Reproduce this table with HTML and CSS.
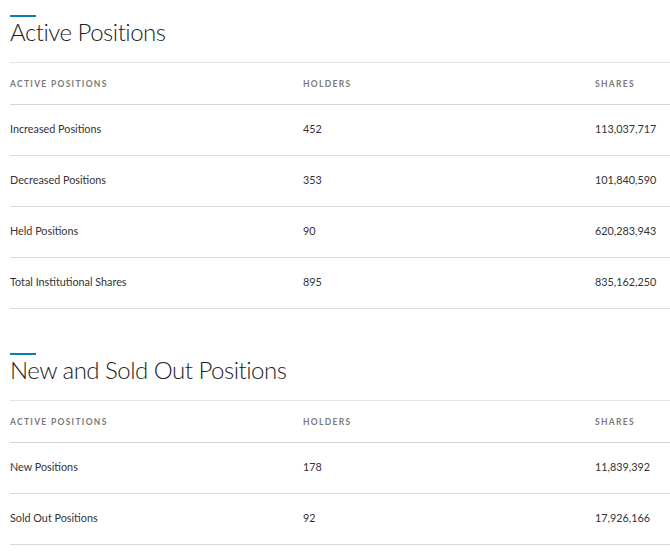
FILE: index.html
```html
<!DOCTYPE html>
<html>
<head>
<meta charset="utf-8">
<link rel="stylesheet" href="styles.css">
</head>
<body>
<section class="block">
  <div class="accent"></div>
  <h2 class="title">Active Positions</h2>
  <table class="data">
    <thead>
      <tr><th class="c1">Active Positions</th><th class="c2">Holders</th><th class="c3">Shares</th></tr>
    </thead>
    <tbody>
      <tr><td>Increased Positions</td><td>452</td><td>113,037,717</td></tr>
      <tr><td>Decreased Positions</td><td>353</td><td>101,840,590</td></tr>
      <tr><td>Held Positions</td><td>90</td><td>620,283,943</td></tr>
      <tr><td>Total Institutional Shares</td><td>895</td><td>835,162,250</td></tr>
    </tbody>
  </table>
</section>
<section class="block second">
  <div class="accent"></div>
  <h2 class="title">New and Sold Out Positions</h2>
  <table class="data">
    <thead>
      <tr><th class="c1">Active Positions</th><th class="c2">Holders</th><th class="c3">Shares</th></tr>
    </thead>
    <tbody>
      <tr><td>New Positions</td><td>178</td><td>11,839,392</td></tr>
      <tr><td>Sold Out Positions</td><td>92</td><td>17,926,166</td></tr>
    </tbody>
  </table>
</section>
</body>
</html>
```

FILE: styles.css
```css
html, body {
  margin: 0;
  padding: 0;
  background: #fff;
}
body {
  padding-left: 10px;
  font-family: Lato, "Liberation Sans", sans-serif;
  color: #333;
}
.block {
  padding-top: 15px;
}
.second {
  padding-top: 44px;
}
.accent {
  width: 26px;
  height: 2px;
  background: #0a80ab;
}
.title {
  margin: 0 0 15px 0;
  font-size: 24px;
  line-height: 30px;
  font-weight: 300;
  letter-spacing: -0.5px;
  color: #222;
}
.data {
  width: 660px;
  border-collapse: collapse;
  table-layout: fixed;
}
.data th {
  height: 41px;
  padding: 0;
  text-align: left;
  font-size: 8.5px;
  font-weight: 700;
  letter-spacing: 1.3px;
  text-transform: uppercase;
  color: #7a7a7a;
  border-top: 1px solid #e4e4e4;
  border-bottom: 1px solid #d6d6d6;
}
.data th.c1 { width: 293px; }
.data th.c2 { width: 292px; }
.data td {
  height: 47px;
  padding: 0 0 3px 0;
  font-size: 10.8px;
  color: #333;
  border-bottom: 1px solid #d9d9d9;
}
```
